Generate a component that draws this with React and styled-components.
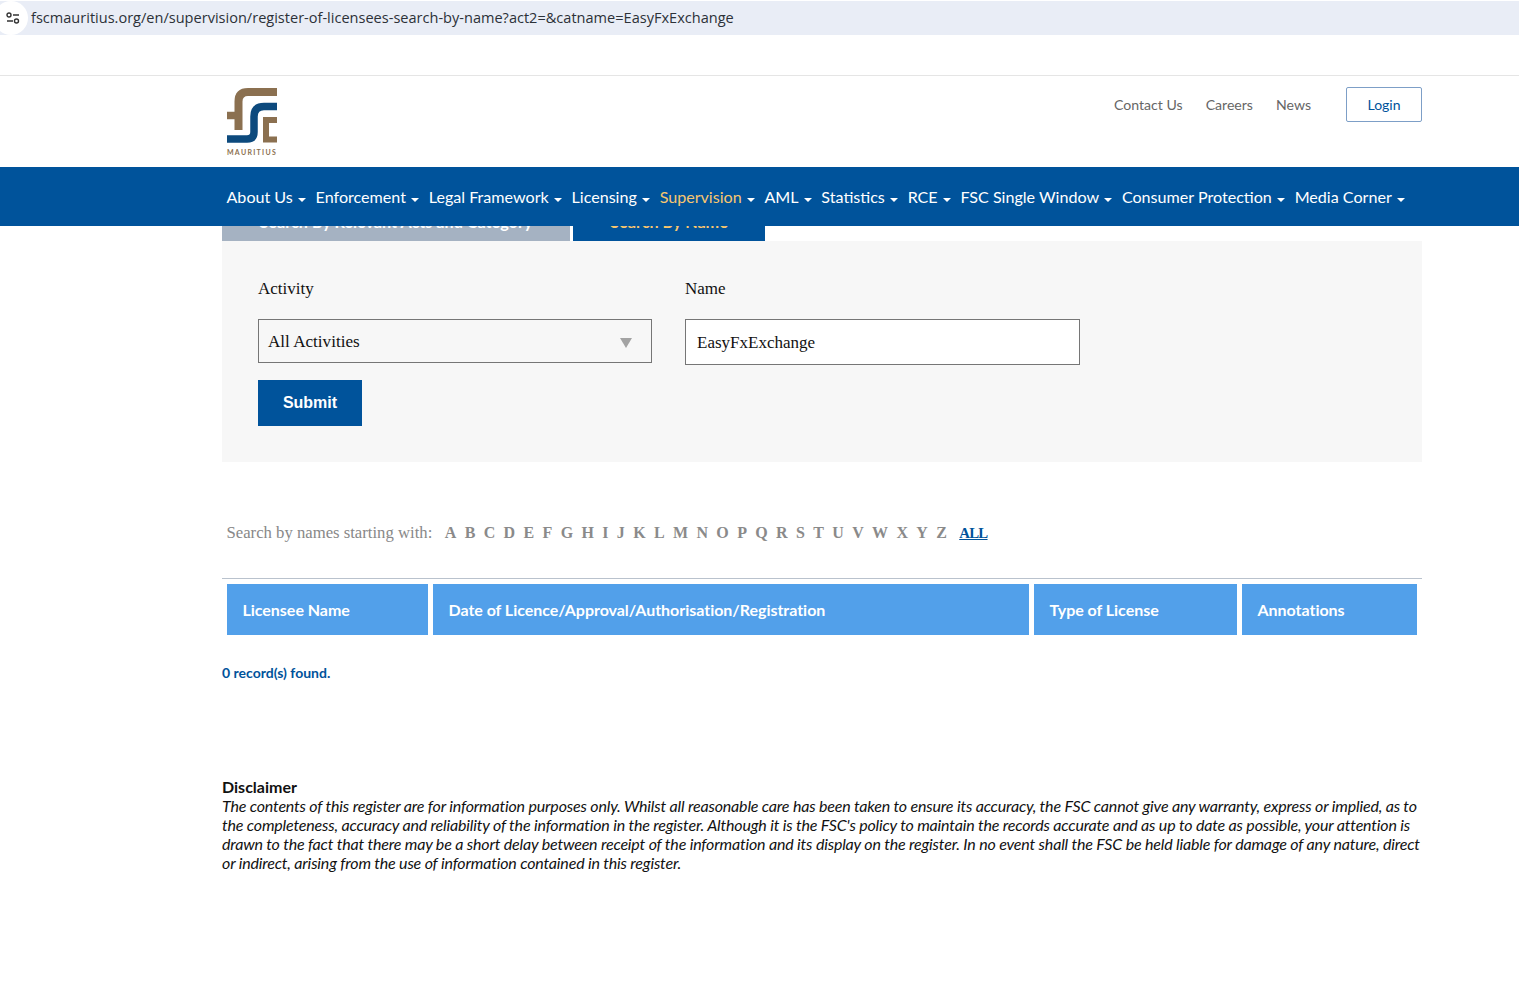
import React from "react";
import styled, { createGlobalStyle } from "styled-components";

const Global = createGlobalStyle`
  html, body { margin: 0; padding: 0; background: #fff; }
  body { font-family: Lato, "Liberation Sans", sans-serif; color: #000; }
  * { box-sizing: border-box; }
`;
const Page = styled.div`
  width: 1519px;
  height: 987px;
  overflow: hidden;
`;
const AddressStrip = styled.div`
  height: 76px;
  padding-top: 1px;
  border-bottom: 1px solid #e5e5e5;
`;
const AddressBar = styled.div`
  height: 34px;
  background: #e9edf6;
  display: flex;
  align-items: center;
  font-family: "Open Sans", sans-serif;
  font-size: 14.55px;
  color: #2c3138;
`;
const SiteBadge = styled.div`
  width: 34px;
  height: 34px;
  margin-left: -6px;
  border-radius: 50%;
  background: #fff;
  display: flex;
  align-items: center;
  justify-content: center;
  padding-left: 3px;
`;
const UrlText = styled.span`
  padding-left: 3px;
  margin-top: -2px;
  white-space: nowrap;
`;
const Header = styled.header`
  height: 91px;
  padding: 11px 97px 0 227px;
  display: flex;
  justify-content: space-between;
  align-items: flex-start;
`;
const LogoBox = styled.div`
  width: 50px;
  display: flex;
  flex-direction: column;
  align-items: center;
  margin-top: 1px;
`;
const LogoWord = styled.span`
  font-family: Lato, sans-serif;
  font-size: 7px;
  font-weight: 700;
  letter-spacing: 1.3px;
  color: #8b7050;
  line-height: 8px;
  margin-top: 4px;
  white-space: nowrap;
`;
const TopLinks = styled.div`
  display: flex;
  align-items: center;
  height: 35px;
`;
const TopLink = styled.a`
  font-size: 14.1px;
  color: #666;
  margin-right: 23px;
`;
const LoginButton = styled.a`
  width: 76px;
  height: 35px;
  margin-left: 12px;
  border: 1px solid #7d9fc7;
  border-radius: 2px;
  display: flex;
  align-items: center;
  justify-content: center;
  font-size: 14px;
  color: #00539b;
`;
const Nav = styled.nav`
  position: relative;
  z-index: 2;
  height: 59px;
  background: #00539b;
  padding-left: 226.5px;
  display: flex;
  align-items: center;
  gap: 9.8px;
`;
const NavItem = styled.a`
  font-size: 16.1px;
  color: ${p => (p.$active ? "#f8c66f" : "#fff")};
  white-space: nowrap;
  display: flex;
  align-items: center;
`;
const Caret = styled.i`
  display: inline-block;
  width: 0;
  height: 0;
  margin-left: 5px;
  margin-top: 6px;
  border-left: 4px solid transparent;
  border-right: 4px solid transparent;
  border-top: 4px solid currentColor;
  color: #fff;
`;
const Content = styled.main`
  width: 1200px;
  margin-left: 222px;
`;
const Tabs = styled.div`
  display: flex;
  gap: 3px;
  height: 36px;
  margin-top: -21px;
  position: relative;
`;
const Tab = styled.div`
  width: ${p => p.$w}px;
  background: ${p => (p.$on ? "#00539b" : "#a5b2c2")};
  color: ${p => (p.$on ? "#f8c66f" : "#fff")};
  font-weight: 700;
  font-size: 16.2px;
  text-align: center;
  line-height: 33px;
  white-space: nowrap;
`;
const Panel = styled.section`
  height: 221px;
  background: #f7f7f7;
  padding: 36px;
  font-family: "Liberation Serif", serif;
`;
const FormGrid = styled.div`
  display: grid;
  grid-template-columns: 394px 395px;
  column-gap: 33px;
  align-items: start;
`;
const Field = styled.div`
  display: flex;
  flex-direction: column;
`;
const Label = styled.label`
  font-size: 17px;
  line-height: 24px;
  margin-bottom: 18px;
  color: #111;
`;
const SelectBox = styled.div`
  height: 44px;
  border: 1px solid #767676;
  padding: 2px 25px 0 9px;
  display: flex;
  align-items: center;
  justify-content: space-between;
  font-size: 17.1px;
  color: #111;
`;
const SelectArrow = styled.i`
  width: 0;
  height: 0;
  border-left: 6px solid transparent;
  border-right: 6px solid transparent;
  border-top: 10px solid #a3a3a3;
  margin-right: -6px;
  margin-top: 1px;
`;
const TextInput = styled.input`
  height: 46px;
  border: 1px solid #767676;
  background: #fff;
  padding: 2px 11px 0;
  font-family: "Liberation Serif", serif;
  font-size: 17px;
  color: #111;
  outline: none;
  width: 100%;
`;
const Submit = styled.button`
  display: block;
  width: 104px;
  height: 46px;
  margin-top: 15px;
  border: 0;
  background: #00539b;
  color: #fff;
  font-family: "Liberation Sans", sans-serif;
  font-weight: 700;
  font-size: 16px;
`;
const AlphaRow = styled.div`
  margin-top: 60px;
  padding-left: 4.5px;
  height: 22px;
  display: flex;
  align-items: center;
  font-family: "Liberation Serif", serif;
  font-size: 16.7px;
  color: #888;
`;
const AlphaLabel = styled.span`
  margin-right: 12.5px;
`;
const Letters = styled.div`
  display: flex;
  gap: 8.35px;
`;
const Letter = styled.a`
  font-size: ${p => (p.$all ? "14.8px" : "16px")};
  font-weight: 700;
  color: ${p => (p.$all ? "#00539b" : "#8a8a8a")};
  text-decoration: ${p => (p.$all ? "underline" : "none")};
  margin-left: ${p => (p.$all ? "4px" : "0")};
  letter-spacing: ${p => (p.$all ? "-0.7px" : "0")};
  line-height: 20px;
`;
const Table = styled.div`
  margin-top: 34px;
  border-top: 1px solid #b9c2cd;
  padding: 5px;
  display: grid;
  grid-template-columns: 201px 596px 203px 175px;
  column-gap: 5px;
`;
const HeadCell = styled.div`
  height: 51px;
  background: #52a0ea;
  color: #fff;
  font-weight: 700;
  font-size: 16px;
  letter-spacing: -0.03px;
  display: flex;
  align-items: center;
  padding-left: 15.5px;
`;
const Records = styled.p`
  margin: 23px 0 0;
  font-size: 14px;
  font-weight: 700;
  line-height: 20px;
  color: #00539b;
`;
const Disclaimer = styled.section`
  margin-top: 94px;
  font-size: 16px;
  line-height: 19px;
  color: #111;
`;
const DisclaimerTitle = styled.div`
  font-weight: 700;
`;
const DisclaimerBody = styled.em`
  display: block;
  white-space: pre-line;
  letter-spacing: -0.175px;
`;

const navItems = ["About Us", "Enforcement", "Legal Framework", "Licensing", "Supervision", "AML", "Statistics", "RCE", "FSC Single Window", "Consumer Protection", "Media Corner"];
const letters = "ABCDEFGHIJKLMNOPQRSTUVWXYZ".split("");

const SiteIcon = () => (
  <svg width="14" height="12" viewBox="0 0 14 12" fill="none" stroke="#333" strokeWidth="1.4">
    <circle cx="3" cy="3" r="2" />
    <path d="M7 3h6M1 9h6" />
    <circle cx="10.5" cy="9" r="2" />
  </svg>
);

const Logo = () => (
  <svg width="50" height="56" viewBox="0 0 50 56" fill="none">
    <path d="M50 4H21Q11.5 4 11.5 13.5V42" stroke="#8b7050" strokeWidth="8" />
    <path d="M0 27.5H15" stroke="#8b7050" strokeWidth="7.5" />
    <path d="M50 18.5H37Q27 18.5 27 28.5V44Q27 51 20 51H0" stroke="#0d4a7d" strokeWidth="7.5" />
    <path d="M50 32H39V51.5H50" stroke="#8b7050" strokeWidth="6" />
  </svg>
);

export default function App() {
  return (
    <Page>
      <Global />
      <AddressStrip>
        <AddressBar>
          <SiteBadge><SiteIcon /></SiteBadge>
          <UrlText>fscmauritius.org/en/supervision/register-of-licensees-search-by-name?act2=&amp;catname=EasyFxExchange</UrlText>
        </AddressBar>
      </AddressStrip>
      <Header>
        <LogoBox>
          <Logo />
          <LogoWord>MAURITIUS</LogoWord>
        </LogoBox>
        <TopLinks>
          <TopLink>Contact Us</TopLink>
          <TopLink>Careers</TopLink>
          <TopLink>News</TopLink>
          <LoginButton>Login</LoginButton>
        </TopLinks>
      </Header>
      <Nav>
        {navItems.map(n => (
          <NavItem key={n} $active={n === "Supervision"}>{n}<Caret /></NavItem>
        ))}
      </Nav>
      <Content>
        <Tabs>
          <Tab $w={348}>Search By Relevant Acts and Category</Tab>
          <Tab $w={192} $on>Search By Name</Tab>
        </Tabs>
        <Panel>
          <FormGrid>
            <Field>
              <Label>Activity</Label>
              <SelectBox>All Activities<SelectArrow /></SelectBox>
            </Field>
            <Field>
              <Label>Name</Label>
              <TextInput readOnly value="EasyFxExchange" />
            </Field>
          </FormGrid>
          <Submit>Submit</Submit>
        </Panel>
        <AlphaRow>
          <AlphaLabel>Search by names starting with:</AlphaLabel>
          <Letters>
            {letters.map(l => <Letter key={l}>{l}</Letter>)}
            <Letter $all>ALL</Letter>
          </Letters>
        </AlphaRow>
        <Table>
          <HeadCell>Licensee Name</HeadCell>
          <HeadCell>Date of Licence/Approval/Authorisation/Registration</HeadCell>
          <HeadCell>Type of License</HeadCell>
          <HeadCell>Annotations</HeadCell>
        </Table>
        <Records>0 record(s) found.</Records>
        <Disclaimer>
          <DisclaimerTitle>Disclaimer</DisclaimerTitle>
          <DisclaimerBody>{`The contents of this register are for information purposes only. Whilst all reasonable care has been taken to ensure its accuracy, the FSC cannot give any warranty, express or implied, as to
the completeness, accuracy and reliability of the information in the register. Although it is the FSC's policy to maintain the records accurate and as up to date as possible, your attention is
drawn to the fact that there may be a short delay between receipt of the information and its display on the register. In no event shall the FSC be held liable for damage of any nature, direct
or indirect, arising from the use of information contained in this register.`}</DisclaimerBody>
        </Disclaimer>
      </Content>
    </Page>
  );
}
